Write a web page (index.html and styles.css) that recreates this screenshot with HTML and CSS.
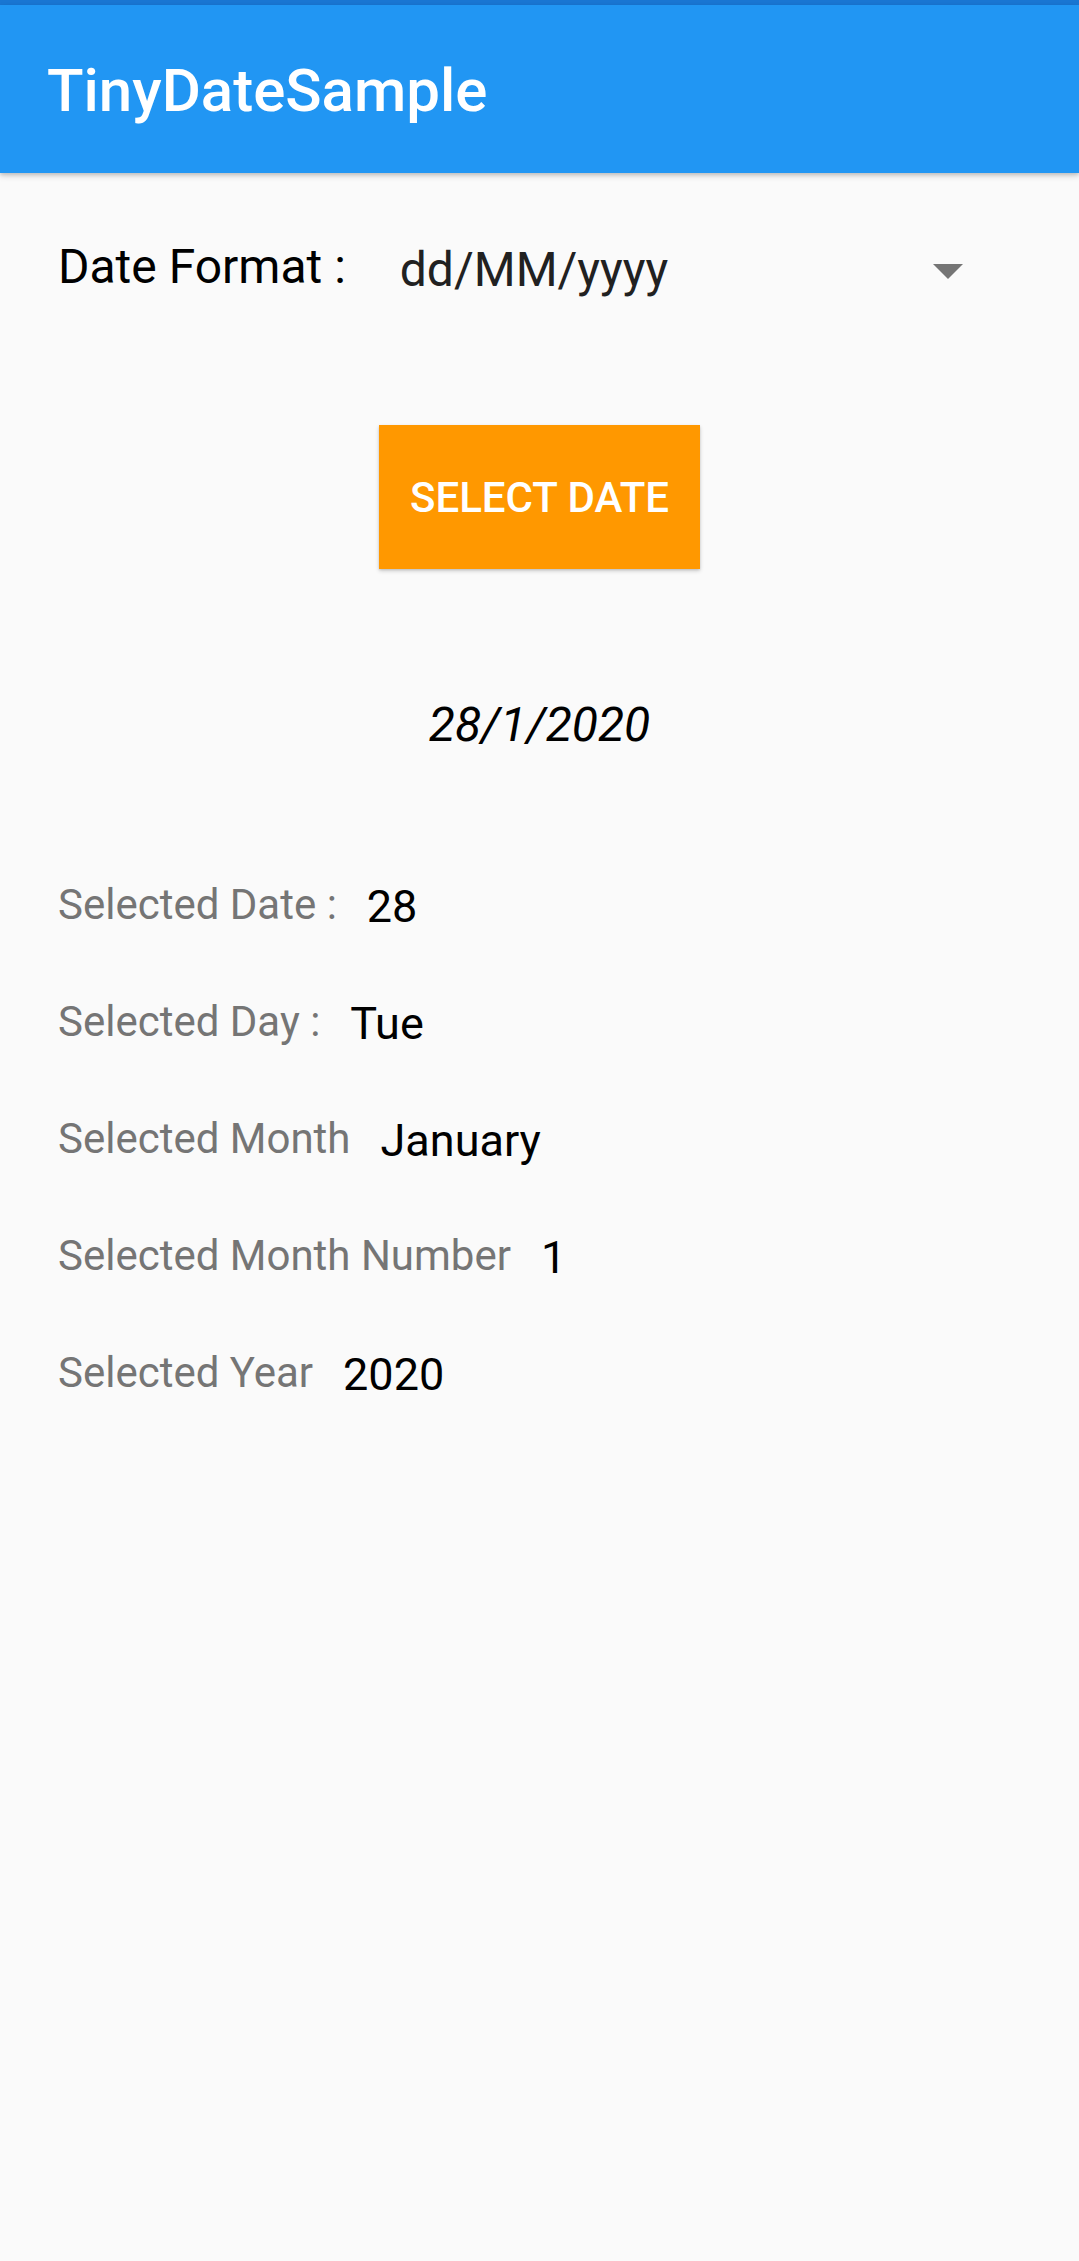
FILE: index.html
```html
<!DOCTYPE html>
<html lang="en">
<head>
<meta charset="utf-8">
<title>TinyDateSample</title>
<link rel="stylesheet" href="styles.css">
</head>
<body>
<div class="status-strip"></div>
<header class="app-bar">
  <h1 class="app-title">TinyDateSample</h1>
</header>
<main class="content">
  <div class="format-row">
    <span class="format-label">Date Format :</span>
    <div class="dropdown">
      <span class="dropdown-value">dd/MM/yyyy</span>
      <svg class="dropdown-icon" viewBox="0 0 24 24" width="72" height="72" aria-hidden="true">
        <path d="M7 10l5 5 5-5z" fill="#757575"/>
      </svg>
    </div>
  </div>
  <button class="select-btn" type="button">SELECT DATE</button>
  <p class="picked-date">28/1/2020</p>
  <div class="details">
    <div class="detail-row"><span class="detail-label">Selected Date :</span><span class="detail-value">28</span></div>
    <div class="detail-row"><span class="detail-label">Selected Day :</span><span class="detail-value">Tue</span></div>
    <div class="detail-row"><span class="detail-label">Selected Month</span><span class="detail-value">January</span></div>
    <div class="detail-row"><span class="detail-label">Selected Month Number</span><span class="detail-value">1</span></div>
    <div class="detail-row"><span class="detail-label">Selected Year</span><span class="detail-value">2020</span></div>
  </div>
</main>
</body>
</html>
```
FILE: styles.css
```css
html, body {
  margin: 0;
  padding: 0;
}
body {
  background: #fafafa;
  font-family: Roboto, "Liberation Sans", sans-serif;
  width: 1079px;
  min-height: 2261px;
}
.status-strip {
  height: 5px;
  background: #1976d2;
}
.app-bar {
  height: 168px;
  background: #2196f3;
  box-shadow: 0 3px 6px rgba(0, 0, 0, 0.16), 0 2px 3px rgba(0, 0, 0, 0.10);
  display: flex;
  align-items: center;
  padding: 3px 0 0 47px;
  box-sizing: border-box;
  position: relative;
  z-index: 1;
}
.app-title {
  margin: 0;
  color: #ffffff;
  font-size: 60px;
  font-weight: 500;
  line-height: 70px;
}
.content {
  display: flex;
  flex-direction: column;
}
.format-row {
  display: flex;
  align-items: flex-start;
  height: 100px;
  margin-top: 44px;
  padding: 0 95px 0 58px;
}
.format-label {
  font-size: 48px;
  line-height: 100px;
  color: #000000;
}
.dropdown {
  flex: 1;
  display: flex;
  align-items: center;
  justify-content: space-between;
  height: 100px;
  padding-top: 6px;
  box-sizing: border-box;
  margin-left: 54px;
}
.dropdown-value {
  font-size: 48px;
  line-height: 60px;
  color: #212121;
}
.dropdown-icon {
  display: block;
}
.select-btn {
  align-self: center;
  margin-top: 108px;
  width: 321px;
  height: 144px;
  border: none;
  border-radius: 0;
  background: #ff9800;
  color: #ffffff;
  font-family: Roboto, "Liberation Sans", sans-serif;
  font-size: 42px;
  font-weight: 500;
  padding: 0;
  box-shadow: 0 2px 4px rgba(0, 0, 0, 0.18), 0 1px 2px rgba(0, 0, 0, 0.10);
}
.picked-date {
  margin: 128px 0 0;
  text-align: center;
  font-size: 48px;
  font-style: italic;
  line-height: 56px;
  color: #000000;
}
.details {
  margin-top: 93px;
  padding-left: 58px;
  display: flex;
  flex-direction: column;
}
.detail-row {
  display: flex;
  align-items: flex-start;
  height: 117px;
}
.detail-label {
  font-size: 42px;
  line-height: 117px;
  color: #757575;
}
.detail-value {
  font-size: 45px;
  line-height: 117px;
  padding-top: 2px;
  margin-left: 30px;
  color: #000000;
}
```
